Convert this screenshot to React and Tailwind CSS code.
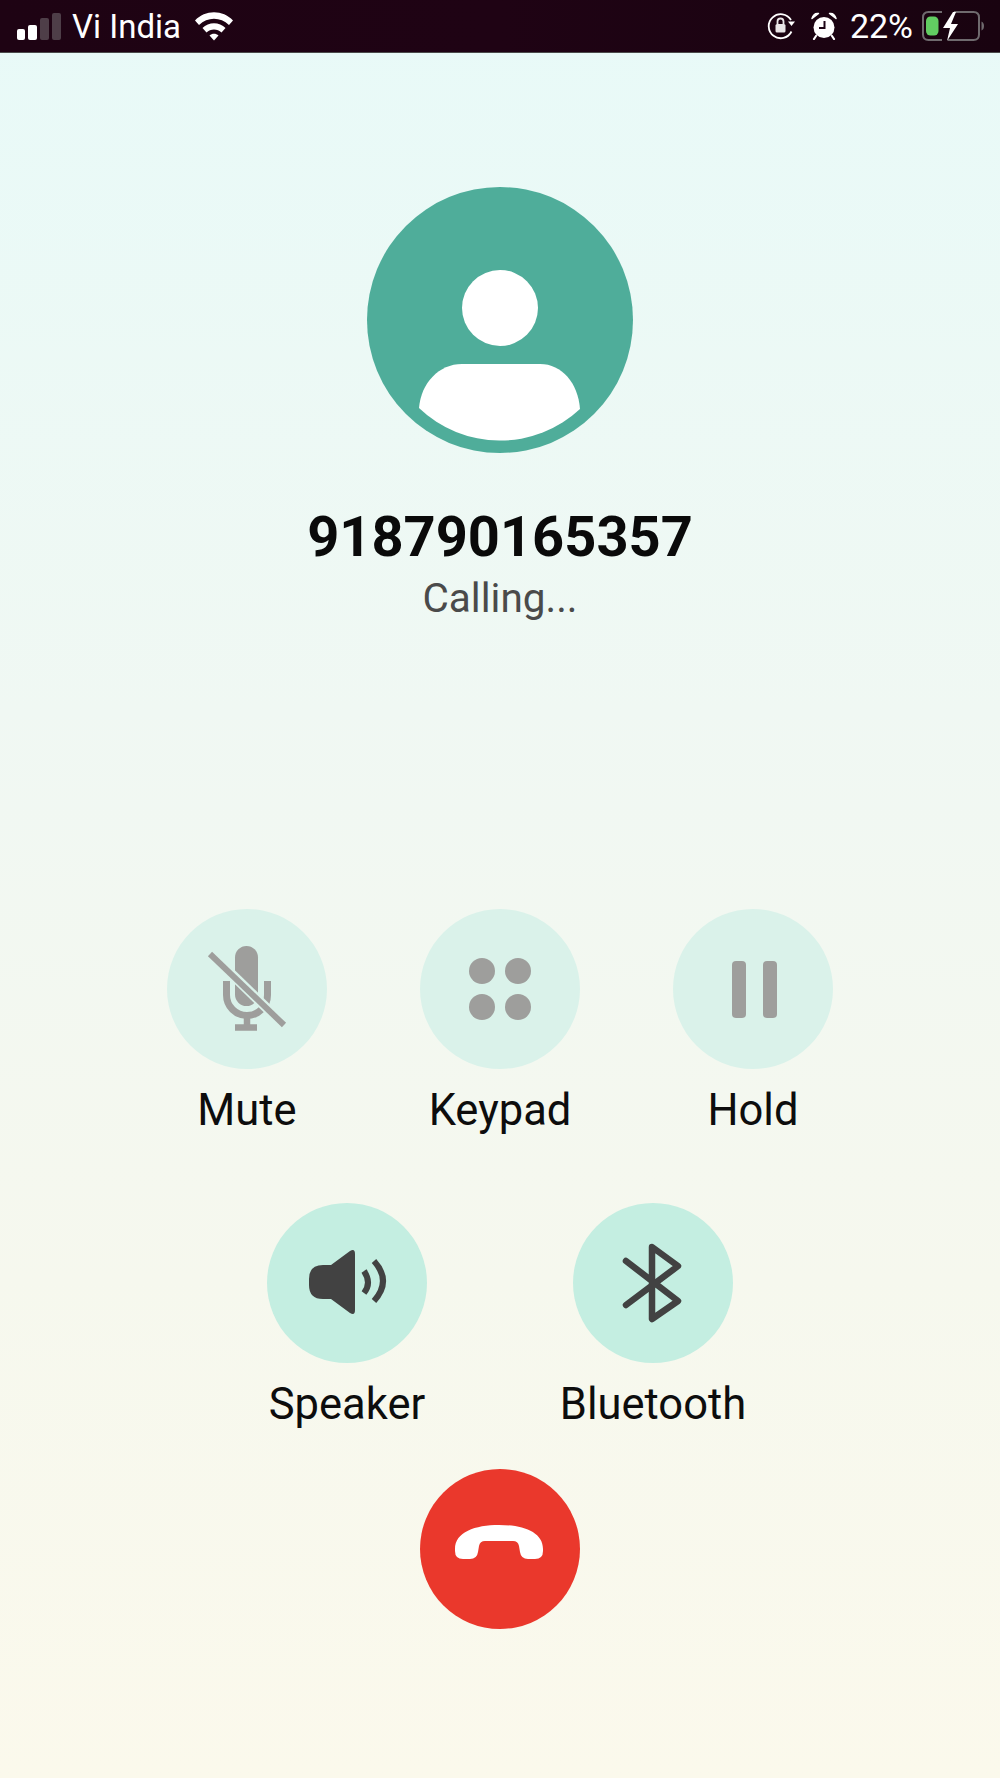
const roboto = "font-['Roboto',sans-serif]";

// Status bar glyphs
const WifiIcon = () => (
  <svg width="40" height="30" viewBox="0 0 40 30" className="ml-[13px]">
    <path d="M1 9.500C11-1.500 29-1.500 39 9.500l-4 4.500C26.500 5.500 13.500 5.500 5 14z" fill="#fff" />
    <path d="M8.500 17C14.500 10.500 25.500 10.500 31.500 17l-4 4.500C23.500 17.500 16.500 17.500 12.500 21.500z" fill="#fff" />
    <path d="M15.500 24.500c2.500-2.500 6.500-2.500 9 0L20 29.500z" fill="#fff" />
  </svg>
);

const RotationLock = () => (
  <svg width="30" height="28" viewBox="0 0 30 28">
    <path d="M25.500 19.500A12 12 0 1 1 25 8" fill="none" stroke="#fff" strokeWidth="1.800" />
    <path d="M22 9.500h7L25.500 14z" fill="#fff" />
    <rect x="9.500" y="12" width="10" height="8.500" rx="1.500" fill="#e8e4e6" />
    <path d="M11.500 12V9.500a3 3 0 0 1 6 0V12" fill="none" stroke="#e8e4e6" strokeWidth="1.800" />
  </svg>
);

const AlarmIcon = () => (
  <svg width="26" height="28" viewBox="0 0 26 28">
    <circle cx="13" cy="15.500" r="10.500" fill="#fff" />
    <path d="M1 6.500C2 3 4.500 1 7.500 1.500zM25 6.500C24 3 21.500 1 18.500 1.500z" fill="#fff" stroke="#fff" strokeWidth="1.500" strokeLinejoin="round" />
    <path d="M5 24l-2 3M21 24l2 3" stroke="#fff" strokeWidth="2.200" strokeLinecap="round" />
    <path d="M13.500 9v7H8" fill="none" stroke="#1c0314" strokeWidth="2" />
  </svg>
);

const BatteryIcon = () => (
  <svg width="64" height="32" viewBox="0 0 64 32">
    <path d="M21 2H7.500Q2 2 2 7.500v17Q2 30 7.500 30H21M33 2h19.500Q58 2 58 7.500v17q0 5.500-5.500 5.500H27" fill="none" stroke="#6f6a6e" strokeWidth="2" />
    <rect x="5" y="6.500" width="12.500" height="19" rx="4.500" fill="#62cd62" />
    <path d="M60.500 11.500q2.500 1 2.500 4.500t-2.500 4.500z" fill="#6f6a6e" />
    <path d="M32 2L22 18h7l-3 13 11-17h-7l5-12z" fill="#fff" />
  </svg>
);

const StatusBar = () => (
  <div className={`flex h-[53px] items-center justify-between border-b border-[#4b4b4b] bg-gradient-to-r from-[#1e0313] via-[#1f0314] to-[#190310] pl-[17px] pr-[15px] text-white ${roboto}`}>
    <div className="flex items-center">
      {/* signal strength, two of four bars lit */}
      <div className="flex h-[27px] items-end gap-[3px]">
        <span className="h-[11px] w-[8px] rounded-[2px] bg-white"></span>
        <span className="h-[15px] w-[9px] rounded-[2px] bg-white"></span>
        <span className="h-[22px] w-[9px] rounded-[2px] bg-[#4e3e48]"></span>
        <span className="h-[27px] w-[9px] rounded-[2px] bg-[#4e3e48]"></span>
      </div>
      <span className="ml-[11px] text-[33px] leading-none">Vi India</span>
      <WifiIcon />
    </div>
    <div className="flex items-center">
      <RotationLock />
      <div className="ml-[15px]"><AlarmIcon /></div>
      <span className="ml-[13px] text-[34px] leading-none">22%</span>
      <div className="ml-[8px]"><BatteryIcon /></div>
    </div>
  </div>
);

// Call control icons, all on a 160 unit circle
const MicOffIcon = () => (
  <svg viewBox="0 0 160 160" className="h-[160px] w-[160px]">
    <rect x="68" y="37" width="23" height="60" rx="11.500" fill="#9e9e9c" />
    <path d="M59.500 72v14a20.500 20.500 0 0 0 41 0V72" fill="none" stroke="#9e9e9c" strokeWidth="7" />
    <path d="M80 105v12M68 118.500h22" stroke="#9e9e9c" strokeWidth="6.500" />
    <path d="M46 47L115 114" stroke="#daf2ea" strokeWidth="10" />
    <path d="M43 45L117 116" stroke="#9e9e9c" strokeWidth="6" />
  </svg>
);

const KeypadIcon = () => (
  <svg viewBox="0 0 160 160" className="h-[160px] w-[160px]" fill="#9e9e9c">
    <circle cx="62" cy="62" r="13" />
    <circle cx="98" cy="62" r="13" />
    <circle cx="62" cy="98" r="13" />
    <circle cx="98" cy="98" r="13" />
  </svg>
);

const PauseIcon = () => (
  <svg viewBox="0 0 160 160" className="h-[160px] w-[160px]" fill="#9e9e9c">
    <rect x="59" y="52" width="14" height="57" rx="4" />
    <rect x="90" y="52" width="14" height="57" rx="4" />
  </svg>
);

const SpeakerIcon = () => (
  <svg viewBox="0 0 160 160" className="h-[160px] w-[160px]">
    <path d="M56 62h8l19-14q5-3 5 3v56q0 6-5 3L64 96H56q-14 0-14-14V76q0-14 14-14z" fill="#424242" />
    <path d="M97 68q8 12 0 22" fill="none" stroke="#424242" strokeWidth="6" />
    <path d="M107 58q18 20 0 40" fill="none" stroke="#424242" strokeWidth="6" />
  </svg>
);

const BluetoothIcon = () => (
  <svg viewBox="0 0 160 160" className="h-[160px] w-[160px]">
    <path d="M53 58L105 98L79 116V44L105 63L53 102" fill="none" stroke="#424242" strokeWidth="6.500" strokeLinecap="round" strokeLinejoin="round" />
  </svg>
);

const HangUpIcon = () => (
  <svg viewBox="0 0 160 160" className="h-[160px] w-[160px]">
    <path d="M35 80C35 63 55 56 79 56S123 63 123 80v2q0 8-8 8h-7q-7 0-8-7l-1-6q-1-5-6-5H65q-5 0-6 5l-1 6q-1 7-8 7h-7q-8 0-8-8z" fill="#fff" />
  </svg>
);

const CallButton = ({ label, bg, children }) => (
  <div className="flex w-[160px] flex-col items-center">
    <div className={`h-[160px] w-[160px] rounded-full ${bg}`}>{children}</div>
    <span className="mt-[18px] whitespace-nowrap text-[43.500px] leading-[48px] text-[#0d0d0d]">{label}</span>
  </div>
);

export default function App() {
  return (
    <div className={`flex min-h-[1778px] w-[1000px] flex-col bg-[linear-gradient(to_bottom,#e8faf8_0%,#f0f8f3_40%,#f6f8ee_72%,#fbf9ec_100%)] ${roboto}`}>
      <StatusBar />

      {/* contact */}
      <div className="mt-[134px] flex flex-col items-center">
        <svg viewBox="0 0 266 266" className="h-[266px] w-[266px]">
          <circle cx="133" cy="133" r="133" fill="#4fad9a" />
          <circle cx="133" cy="121" r="38" fill="#fff" />
          <path d="M52 221C54 196 72 177 95 177H173C195 177 211 196 213 222A117 117 0 0 1 52 221z" fill="#fff" />
        </svg>
        <span className="mt-[51px] text-[56px] font-bold leading-[66px] text-[#0a0a0a]">918790165357</span>
        <span className="mt-[5px] text-[40.500px] leading-[46px] text-[#4a4a4a]">Calling...</span>
      </div>

      {/* in-call controls */}
      <div className="mt-[288px] flex justify-center gap-[93px]">
        <CallButton label="Mute" bg="bg-[#daf2ea]"><MicOffIcon /></CallButton>
        <CallButton label="Keypad" bg="bg-[#daf2ea]"><KeypadIcon /></CallButton>
        <CallButton label="Hold" bg="bg-[#daf2ea]"><PauseIcon /></CallButton>
      </div>
      <div className="mt-[68px] flex justify-center gap-[146px]">
        <CallButton label="Speaker" bg="bg-[#c4eee1]"><SpeakerIcon /></CallButton>
        <CallButton label="Bluetooth" bg="bg-[#c4eee1]"><BluetoothIcon /></CallButton>
      </div>

      <div className="mt-[40px] flex justify-center">
        <div className="h-[160px] w-[160px] rounded-full bg-[#ea382c]"><HangUpIcon /></div>
      </div>
    </div>
  );
}
